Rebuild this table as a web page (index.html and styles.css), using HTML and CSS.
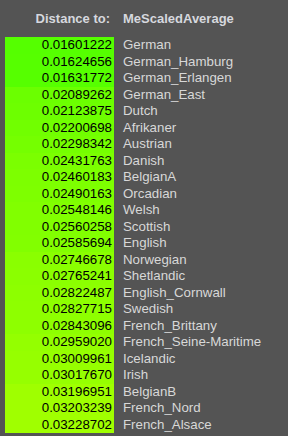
FILE: index.html
```html
<!DOCTYPE html>
<html>
<head>
<meta charset="utf-8">
<link rel="stylesheet" href="styles.css">
</head>
<body>
<div class="panel">
  <div class="head">
    <div class="hleft">Distance to:</div>
    <div class="hright">MeScaledAverage</div>
  </div>
  <div class="list">
    <div class="row"><div class="val" style="background:#55ff00">0.01601222</div><div class="name">German</div></div>
    <div class="row"><div class="val" style="background:#56ff00">0.01624656</div><div class="name">German_Hamburg</div></div>
    <div class="row"><div class="val" style="background:#56ff00">0.01631772</div><div class="name">German_Erlangen</div></div>
    <div class="row"><div class="val" style="background:#6bff00">0.02089262</div><div class="name">German_East</div></div>
    <div class="row"><div class="val" style="background:#6dff00">0.02123875</div><div class="name">Dutch</div></div>
    <div class="row"><div class="val" style="background:#71ff00">0.02200698</div><div class="name">Afrikaner</div></div>
    <div class="row"><div class="val" style="background:#75ff00">0.02298342</div><div class="name">Austrian</div></div>
    <div class="row"><div class="val" style="background:#7bff00">0.02431763</div><div class="name">Danish</div></div>
    <div class="row"><div class="val" style="background:#7dff00">0.02460183</div><div class="name">BelgianA</div></div>
    <div class="row"><div class="val" style="background:#7eff00">0.02490163</div><div class="name">Orcadian</div></div>
    <div class="row"><div class="val" style="background:#81ff00">0.02548146</div><div class="name">Welsh</div></div>
    <div class="row"><div class="val" style="background:#81ff00">0.02560258</div><div class="name">Scottish</div></div>
    <div class="row"><div class="val" style="background:#82ff00">0.02585694</div><div class="name">English</div></div>
    <div class="row"><div class="val" style="background:#8aff00">0.02746678</div><div class="name">Norwegian</div></div>
    <div class="row"><div class="val" style="background:#8bff00">0.02765241</div><div class="name">Shetlandic</div></div>
    <div class="row"><div class="val" style="background:#8dff00">0.02822487</div><div class="name">English_Cornwall</div></div>
    <div class="row"><div class="val" style="background:#8eff00">0.02827715</div><div class="name">Swedish</div></div>
    <div class="row"><div class="val" style="background:#8eff00">0.02843096</div><div class="name">French_Brittany</div></div>
    <div class="row"><div class="val" style="background:#94ff00">0.02959020</div><div class="name">French_Seine-Maritime</div></div>
    <div class="row"><div class="val" style="background:#96ff00">0.03009961</div><div class="name">Icelandic</div></div>
    <div class="row"><div class="val" style="background:#96ff00">0.03017670</div><div class="name">Irish</div></div>
    <div class="row"><div class="val" style="background:#9fff00">0.03196951</div><div class="name">BelgianB</div></div>
    <div class="row"><div class="val" style="background:#a0ff00">0.03203239</div><div class="name">French_Nord</div></div>
    <div class="row"><div class="val" style="background:#a0ff00">0.03228702</div><div class="name">French_Alsace</div></div>
  </div>
</div>
</body>
</html>
```
FILE: styles.css
```css
html, body {
  margin: 0;
  padding: 0;
  background: #545454;
}
body {
  width: 288px;
  height: 436px;
  overflow: hidden;
  font-family: "Liberation Sans", Arial, sans-serif;
  font-size: 13.3px;
  line-height: 16.5px;
}
.panel {
  padding-left: 5px;
}
.head {
  display: flex;
  gap: 13px;
  padding-top: 11px;
  height: 26px;
  font-weight: bold;
  font-size: 13px;
  color: #d6d8de;
}
.hleft {
  width: 105px;
  text-align: right;
}
.list {
  display: flex;
  flex-direction: column;
}
.row {
  display: flex;
  gap: 9px;
  height: 16.5px;
}
.val {
  width: 107px;
  padding-right: 2px;
  text-align: right;
  color: #000;
}
.name {
  color: #d8d8d8;
  white-space: nowrap;
}
```
